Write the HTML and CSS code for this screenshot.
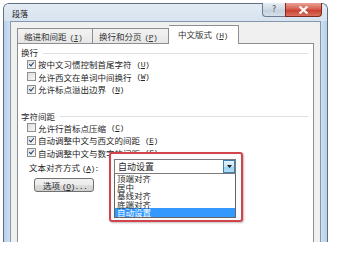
FILE: index.html
```html
<!DOCTYPE html>
<html lang="zh-CN">
<head>
<meta charset="utf-8">
<title>段落</title>
<link rel="stylesheet" href="styles.css">
</head>
<body>
<div class="window">
  <div class="titlebar">
    <span class="title">段落</span>
    <div class="caption-btns">
      <div class="cbtn help">?</div>
      <div class="cbtn close"><svg width="11" height="8" viewBox="0 0 11 8"><path d="M1.5 0.5 L9.5 7.5 M9.5 0.5 L1.5 7.5" stroke="#fff" stroke-width="2.2"/></svg></div>
    </div>
  </div>
  <div class="client">
    <div class="tabs">
      <div class="tab">缩进和间距<span class="key">(<u>I</u>)</span></div>
      <div class="tab">换行和分页<span class="key">(<u>P</u>)</span></div>
      <div class="tab active">中文版式<span class="key">(<u>H</u>)</span></div>
    </div>
    <div class="panel">
      <div class="group-title"><span>换行</span></div>
      <div class="check"><span class="box on"></span>按中文习惯控制首尾字符<span class="key">(<u>U</u>)</span></div>
      <div class="check"><span class="box"></span>允许西文在单词中间换行<span class="key">(<u>W</u>)</span></div>
      <div class="check"><span class="box on"></span>允许标点溢出边界<span class="key">(<u>N</u>)</span></div>
      <div class="group-title second"><span>字符间距</span></div>
      <div class="check"><span class="box"></span>允许行首标点压缩<span class="key">(<u>C</u>)</span></div>
      <div class="check"><span class="box on"></span>自动调整中文与西文的间距<span class="key">(<u>E</u>)</span></div>
      <div class="check"><span class="box on"></span>自动调整中文与数字的间距<span class="key">(<u>S</u>)</span></div>
      <div class="align-row">
        <span class="align-label">文本对齐方式<span class="key">(<u>A</u>):</span></span>
        <div class="combo-wrap">
          <div class="highlight"></div>
          <div class="combo">
            <span class="combo-text">自动设置</span>
            <span class="combo-arrow"><svg width="5" height="3" viewBox="0 0 5 3"><path d="M0 0 H5 L2.5 3 Z" fill="#1a1a1a"/></svg></span>
          </div>
          <ul class="list">
            <li>顶端对齐</li>
            <li>居中</li>
            <li>基线对齐</li>
            <li>底端对齐</li>
            <li class="sel">自动设置</li>
          </ul>
        </div>
      </div>
      <div class="btn-row"><div class="button">选项<span class="key">(<u>O</u>)...</span></div></div>
    </div>
  </div>
</div>
</body>
</html>
```
FILE: styles.css
```css
html, body {
  margin: 0;
  padding: 0;
  background: #ffffff;
  width: 338px;
  height: 254px;
  overflow: hidden;
}
body {
  font-family: "Noto Sans CJK SC", "Noto Sans", sans-serif;
  font-size: 8.5px;
  color: #262626;
}
u { text-decoration: underline; }
.key {
  font-family: "Liberation Mono", "DejaVu Sans Mono", monospace;
  font-size: 8px;
  margin-left: 3px;
  letter-spacing: -0.6px;
}

.window {
  margin: 3px 0 0 3px;
  width: 325px;
  height: 239px;
  box-sizing: border-box;
  border: 1px solid #5e6f84;
  border-bottom: none;
  border-radius: 6px 6px 0 0;
  background: linear-gradient(90deg, #b8d0ea 0px, #cfdff0 6px, #dbe6f2 50%, #cfdff0 calc(100% - 6px), #b8d0ea 100%);
  padding: 0 6px;
  display: flex;
  flex-direction: column;
}
.titlebar {
  height: 17px;
  display: flex;
  align-items: center;
  background: linear-gradient(#e3ebf4, #d7e3f0);
  margin: 0 -6px;
  padding: 0 0 0 8px;
  border-radius: 5px 5px 0 0;
}
.title {
  font-size: 8px;
  color: #1b1b1b;
  padding-top: 1px;
}
.caption-btns {
  margin-left: auto;
  align-self: flex-start;
  margin-top: -1px;
  margin-right: 5px;
  display: flex;
}
.cbtn {
  height: 14px;
  box-sizing: border-box;
  border: 1px solid #6d7c8e;
  border-top: none;
  display: flex;
  align-items: center;
  justify-content: center;
}
.help {
  width: 23px;
  border-radius: 0 0 0 4px;
  background: linear-gradient(#e7edf3, #cfd9e4 50%, #c3cfdc 51%, #d5dfe9);
  color: #4a5563;
  font-family: "DejaVu Sans", sans-serif;
  font-size: 8px;
  border-right: none;
}
.close {
  width: 37px;
  border-radius: 0 0 4px 0;
  border-color: #7a2a22;
  background: linear-gradient(#e8a396, #d6594a 50%, #c73a28 51%, #d9715e);
}

.client {
  flex: 1;
  background: #f0f0f0;
  border: 1px solid #8497ad;
  border-bottom: none;
  padding: 3px 6px 0 6px;
  display: flex;
  flex-direction: column;
}
.tabs {
  display: flex;
  align-items: flex-end;
  height: 18px;
  position: relative;
  z-index: 1;
}
.tab {
  height: 15px;
  box-sizing: border-box;
  border: 1px solid #8c8e94;
  border-bottom: none;
  border-right: none;
  background: linear-gradient(#f3f3f3, #e6e6e6);
  padding: 0 6px;
  line-height: 14px;
  color: #333333;
  white-space: nowrap;
}
.tab:nth-child(1) { width: 75px; padding-left: 6px; }
.tab:nth-child(2) { width: 77px; border-right: 1px solid #8c8e94; }
.tab.active {
  width: 70px;
  height: 19px;
  margin-bottom: -1px;
  background: #ffffff;
  border-left: none;
  border-right: 1px solid #8c8e94;
  line-height: 16px;
  padding-left: 9px;
}
.panel {
  flex: 1;
  background: #ffffff;
  border: 1px solid #8c8e94;
  border-bottom: none;
  padding: 3px 5px 0 3px;
  display: flex;
  flex-direction: column;
}
.group-title {
  display: flex;
  align-items: center;
  height: 11px;
  line-height: 11px;
  gap: 5px;
}
.group-title::after {
  content: "";
  flex: 1;
  border-top: 1px solid #dde1e6;
  margin-top: 1px;
}
.group-title.second { margin-top: 15px; }
.check {
  display: flex;
  align-items: center;
  height: 12.5px;
  padding-left: 6px;
  gap: 2px;
  white-space: nowrap;
}
.box {
  width: 9px;
  height: 9px;
  box-sizing: border-box;
  border: 1px solid #8e8f8f;
  background: linear-gradient(135deg, #dedede, #f8f8f8);
  position: relative;
  flex: none;
}
.box.on::after {
  content: "";
  position: absolute;
  left: 2px;
  top: 0px;
  width: 2px;
  height: 4px;
  border: solid #24406a;
  border-width: 0 1.5px 1.5px 0;
  transform: rotate(40deg);
}
.align-row {
  display: flex;
  align-items: center;
  height: 15px;
  padding-left: 8px;
}
.align-label { width: 85px; white-space: nowrap; }
.align-label .key { margin-left: 2px; }
.combo-wrap {
  position: relative;
  width: 122px;
  height: 15px;
}
.combo {
  height: 15px;
  box-sizing: border-box;
  border: 1px solid #7a7a7a;
  background: #ffffff;
  display: flex;
  align-items: center;
  padding-left: 3px;
  position: relative;
  z-index: 2;
  font-size: 9px;
}
.combo-arrow {
  margin-left: auto;
  width: 12px;
  height: 13px;
  box-sizing: border-box;
  border: 1px solid #3c7fb1;
  background: linear-gradient(#e5f4fc, #c4e5f6 50%, #98d1ef 51%, #b3dcf2);
  display: flex;
  align-items: center;
  justify-content: center;
}
.list {
  position: absolute;
  left: 0;
  top: 15px;
  width: 122px;
  margin: 0;
  padding: 0;
  list-style: none;
  box-sizing: border-box;
  border: 1px solid #646464;
  border-top: none;
  background: #ffffff;
  z-index: 2;
  font-size: 8.5px;
}
.list li {
  height: 8.6px;
  line-height: 8.6px;
  padding-left: 2px;
  white-space: nowrap;
}
.list li.sel {
  background: #3399ff;
  color: #ffffff;
  height: 9px;
}
.highlight {
  position: absolute;
  left: -5px;
  top: -7px;
  width: 134px;
  height: 70px;
  box-sizing: border-box;
  border: 2px solid #d2434b;
  border-radius: 3px;
  background: #fbfbfb;
  box-shadow: 1px 1px 2px rgba(0,0,0,0.25);
  z-index: 1;
}
.btn-row {
  padding-left: 13px;
  margin-top: 4px;
}
.button {
  width: 60px;
  height: 14px;
  box-sizing: border-box;
  border: 1px solid #707070;
  border-radius: 3px;
  background: linear-gradient(#f2f2f2, #ebebeb 50%, #dddddd 51%, #cfcfcf);
  line-height: 12px;
  padding-left: 8px;
  white-space: nowrap;
}
.button .key { margin-left: 2px; }
```
